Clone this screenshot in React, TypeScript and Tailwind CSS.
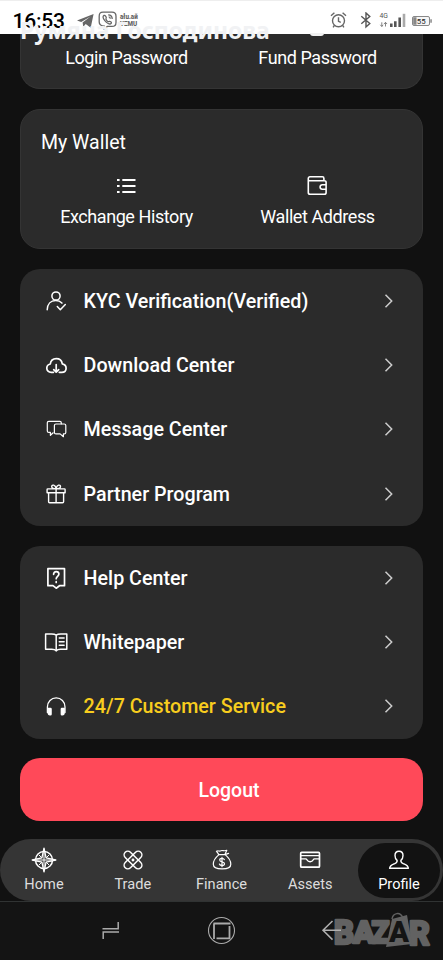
import type { ReactNode } from "react";

type IconProps = { children: ReactNode; w?: number; h?: number; sw?: number; className?: string };

function Icon({ children, w = 24, h = 24, sw = 1.4, className = "" }: IconProps) {
  return (
    <svg
      width={w}
      height={h}
      viewBox={`0 0 ${w} ${h}`}
      fill="none"
      stroke="currentColor"
      strokeWidth={sw}
      strokeLinecap="round"
      strokeLinejoin="round"
      className={`block shrink-0 ${className}`}
    >
      {children}
    </svg>
  );
}

const kyc = (
  <Icon sw={1.5}>
    <circle cx="12" cy="7" r="4.1" />
    <path d="M3.2 20.8c.2-5.6 3.6-9.2 8.5-9.2 3 0 4.8.9 6.2 2.5M13.3 17.6l3 3.1 5-5.2" />
  </Icon>
);
const cloud = (
  <Icon sw={1.7}>
    <path d="M9.4 19.3H7.2c-2.6 0-4.4-1.8-4.4-4.1 0-2.2 1.5-3.8 3.5-4.2.4-3.3 2.8-5.4 6-5.4 3.1 0 5.5 2.1 6 5.2 2.2.4 3.8 2.1 3.8 4.4 0 2.4-1.8 4.1-4.4 4.1h-2.4M12.2 11.5v7.3M9.7 16.6l2.5 2.6 2.5-2.6" />
  </Icon>
);
const message = (
  <Icon sw={1.2}>
    <path d="M9.2 15.8l-2.8 2.5v-2.9H4.8c-1 0-1.5-.6-1.5-1.5V5.8c0-.9.6-1.5 1.5-1.5h11c1 0 1.5.6 1.5 1.5v1" />
    <path d="M12 7h8.2c1 0 1.6.6 1.6 1.5v6.9c0 .9-.6 1.5-1.6 1.5h-.8v2.8l-3.3-2.8H12c-1 0-1.6-.6-1.6-1.5V8.5c0-.9.6-1.5 1.6-1.5z" />
  </Icon>
);
const gift = (
  <Icon sw={1.4}>
    <path d="M3.8 6.9h16.6c.4 0 .7.3.7.7v3.2H3.1V7.6c0-.4.3-.7.7-.7zM4.6 10.8v9c0 .6.4 1 1 1h13c.6 0 1-.4 1-1v-9M12.1 6.9v13.9M12.1 6.7C9.7 6.7 7.7 6.2 7.7 4.5c0-2.2 3.7-2 4.4 2.2.7-4.2 4.4-4.4 4.4-2.2 0 1.7-2 2.2-4.4 2.2z" />
  </Icon>
);
const help = (
  <Icon sw={1.7}>
    <path d="M3.9 2.7h16.6v17h-5L12.2 22.2 9 19.7H3.9z" />
    <path d="M9.6 8.3c0-1.7 1-2.7 2.6-2.7s2.7.9 2.7 2.5c0 2.1-2.7 2.3-2.7 4.6M12.2 15.7v.7" />
  </Icon>
);
const book = (
  <Icon sw={1.5}>
    <path d="M12.2 5.2C11 4.3 9.3 4.1 7.5 4.1H1.6v15.2h6.2c2 0 3.4.3 4.4 1.6 1-1.3 2.4-1.6 4.4-1.6h6.2V4.1h-5.9c-1.8 0-3.5.2-4.7 1.1zM12.2 5.2v15.7M15.3 8.1h4.8M15.3 11.7h4.8M15.3 15.3h4.8" />
  </Icon>
);
const headset = (
  <Icon sw={1.3}>
    <path d="M3.4 18.6v-5.7c0-5.2 3.9-9 8.8-9s8.8 3.8 8.8 9v5.7" />
    <path d="M5 14.3h1.5c.4 0 .6.2.6.6v5.4c0 .4-.2.6-.6.6H6c-1.2 0-1.8-1-1.8-2.3v-4.3zM19.4 14.3h-1.5c-.4 0-.6.2-.6.6v5.4c0 .4.2.6.6.6h.5c1.2 0 1.8-1 1.8-2.3v-4.3z" fill="currentColor" />
  </Icon>
);

function MenuRow({ icon, label, yellow }: { icon: ReactNode; label: string; yellow?: boolean }) {
  return (
    <div className="flex h-[64.2px] items-center pr-[27px] pl-6 text-white">
      {icon}
      <span className={`mt-[1.5px] ml-[15.6px] text-[19.7px] leading-none font-medium whitespace-nowrap ${yellow ? "text-[#f8cd1e]" : ""}`}>
        {label}
      </span>
      <Icon w={16} h={16} sw={1.5} className="ml-auto text-[#cccccc]">
        <path d="M5.5 1.8l6.2 6.2-6.2 6.2" strokeLinecap="butt" strokeLinejoin="miter" />
      </Icon>
    </div>
  );
}

function StatusBar() {
  return (
    <header className="relative flex h-[34px] items-center border-t border-[#eeeeee] bg-white text-[#5c5c5c]">
      <span className="mt-[8px] ml-[12.5px] w-[63.5px] text-[21px] leading-none font-medium tracking-[-0.2px] whitespace-nowrap text-black">16:53</span>
      <svg className="mt-[7px] shrink-0" width="18" height="16" viewBox="0 0 18 16" fill="#666">
        <path d="M1 7.4L17.6 1l-2.9 13.8-5-3.7-2.4 2.7-.7-4.3 7.9-5.9-9.3 5.3z" />
      </svg>
      <svg className="mt-[5px] ml-[4px] shrink-0" width="20" height="19" viewBox="0 0 20 19" fill="none" stroke="#666" strokeWidth="1.3">
        <path d="M5 1.2h9c3 0 4 1.2 4 4v6.2c0 2.8-1 4-4 4H9.3l-3 2.6v-2.8C2.7 14.8 1.2 14 1.2 11V5.2c0-2.8 1-4 3.8-4z" />
        <path d="M6 4.4c-1.8 1-.8 3.2.8 5.2 1.9 2.4 5 4.5 6.4 2.7.9-1.2-1.4-2.3-2.1-1.8-1.2.8-3.9-2.2-3-3.3.7-.8-.9-3.3-2.1-2.8zM10.2 3.8c2.6.1 4 1.6 4 4.2M10.7 5.8c1.1.1 1.6.8 1.6 1.9" />
      </svg>
      <div className="mt-[6px] ml-[2px] w-5 text-[6.3px] leading-[7px] font-black whitespace-nowrap text-[#666]">
        <div>ału.ай</div>
        <div>YEMU</div>
      </div>
      <svg className="absolute top-[10px] left-[330px]" width="17" height="18" viewBox="0 0 17 18" fill="none" stroke="#666" strokeWidth="1.4">
        <circle cx="8.5" cy="9.8" r="6" />
        <path d="M8.5 6.3v4l2.3 1.1M1 4.8l3.4-3M16 4.8l-3.4-3M4.4 14.4l-1.3 2M12.6 14.4l1.3 2" />
      </svg>
      <svg className="absolute top-[11px] left-[360px]" width="12" height="17" viewBox="0 0 12 17" fill="none" stroke="#555" strokeWidth="1.4">
        <path d="M1.3 4.3l8.5 7.2L6 15V1l3.8 3.5-8.5 7.2" />
      </svg>
      <svg className="absolute top-[9px] left-[378px]" width="55" height="18" viewBox="0 0 55 18">
        <text x="1.5" y="7.5" fontSize="6.8" fontFamily="Roboto, sans-serif" fill="#555">4G</text>
        <path d="M3.8 16.5v-4.2M2.3 14.8l1.5 1.7 1.3-1.7M7.5 16.5v-4.2M6 14l1.5-1.7L9 14" fill="none" stroke="#777" strokeWidth=".9" />
        <path d="M12 13.5h2.6V17H12zM16 11.3h2.6V17H16zM20.4 7.5h2.6V17h-2.6z" fill="#555" />
        <path d="M24.7 3.8h2.6V17h-2.6z" fill="#aaa" />
        <rect x="34.5" y="6.5" width="17" height="9" rx="1.5" fill="#f6f6f6" stroke="#888" />
        <path d="M35.2 7.3h3.3v7.5h-3.3zM52.3 9.3h1.5v3.5h-1.5z" fill="#888" />
        <text x="38.8" y="13.8" fontSize="7.8" fontFamily="Roboto, sans-serif" fill="#222">55</text>
      </svg>
      <span className="absolute top-[14.5px] left-[20px] z-10 font-['Noto_Sans'] text-[23px] leading-[28px] font-bold whitespace-nowrap text-[#f1f2f4]">Румяна Господинова</span>
      <span className="absolute top-[32px] left-[310px] h-[2.5px] w-[14px] rounded-b bg-[#f1f1f1]" />
    </header>
  );
}

function NavItem({ icon, label, active }: { icon: ReactNode; label: string; active?: boolean }) {
  return (
    <div className={`flex h-[55px] w-[82px] flex-col items-center rounded-full pt-[4.5px] ${active ? "bg-[#121212] text-white" : "text-[#dddddd]"}`}>
      <div className="text-white">{icon}</div>
      <span className="mt-[1.5px] text-[14.6px] leading-[18px]">{label}</span>
    </div>
  );
}

const compass = (
  <Icon w={26} h={26} sw={1.5}>
    <circle cx="13" cy="13" r="8.5" />
    <path d="M13 1.2l2.1 9.7 9.7 2.1-9.7 2.1L13 24.8l-2.1-9.7L1.2 13l9.7-2.1z" fill="#353535" strokeWidth="1.3" />
    <path d="M13 2v22M2 13h22M8.2 8.2l2.4 2.4M17.8 8.2l-2.4 2.4M8.2 17.8l2.4-2.4M17.8 17.8l-2.4-2.4" strokeWidth="1" />
  </Icon>
);
const trade = (
  <Icon w={26} h={26} sw={1.5}>
    <rect x="9.3" y="2" width="7.4" height="22" rx="3.7" transform="rotate(45 13 13)" />
    <rect x="9.3" y="2" width="7.4" height="22" rx="3.7" transform="rotate(-45 13 13)" />
    <circle cx="13" cy="13" r=".7" fill="currentColor" />
  </Icon>
);
const finance = (
  <Icon w={26} h={26} sw={1.2}>
    <path d="M9.7 7.4L7.4 4.2c2-.8 3.1.5 4.6-.5 1.5-.8 2.8.8 5.8-.4l-1.9 4.1M9.4 7.7h7M9.7 7.9c-2.5 2.1-5.4 5.4-5.4 9.3 0 3.3 2.4 4.7 8.8 4.7s8.7-1.4 8.7-4.7c0-3.9-2.9-7.2-5.4-9.3M16.6 7.4l3-1" />
    <path d="M15.3 12.6c-.4-.8-1.2-1.2-2.3-1.2-1.4 0-2.3.7-2.3 1.7 0 2.4 4.8 1.1 4.8 3.6 0 1.1-1 1.8-2.5 1.8-1.4 0-2.3-.6-2.6-1.5M13 10.3v9.4" />
  </Icon>
);
const assets = (
  <Icon w={26} h={26} sw={1.7}>
    <rect x="3.7" y="5.4" width="18.8" height="14.8" rx="1" />
    <path d="M4 8.6h18.2M4 11.8h4.7c.8 0 1 .5 1.4 1.2.5 1 1.4 1.7 3 1.7s2.5-.7 3-1.7c.4-.7.6-1.2 1.4-1.2h4.7" strokeWidth="1.35" />
  </Icon>
);
const person = (
  <Icon w={26} h={26} sw={1.4}>
    <path d="M13 4.2c-2.6 0-4 1.8-4 4.3 0 2.2.8 3.8 2.1 4.9.3 1.8-.5 2.5-2.3 3.2-2.5 1-4.8 1.5-5.2 4.7h18.8c-.4-3.2-2.7-3.7-5.2-4.7-1.8-.7-2.6-1.4-2.3-3.2C16.2 12.3 17 10.7 17 8.5c0-2.5-1.4-4.3-4-4.3z" />
  </Icon>
);

export default function App() {
  return (
    <div className="flex h-[960px] w-[443px] flex-col overflow-hidden bg-[#111111] font-['Roboto',sans-serif] text-white">
      <StatusBar />
      <main className="mx-5 flex flex-col text-[18px] tracking-[-0.42px]">
        <section className="flex h-[55px] rounded-b-[20px] border border-t-0 border-[#343434] bg-[#2b2b2b] pt-[14px] leading-5">
          <div className="w-[211px] text-center">Login Password</div>
          <div className="w-[171px] text-center">Fund Password</div>
        </section>

        <section className="mt-5 flex h-[140px] flex-col rounded-[20px] border border-[#343434] bg-[#2b2b2b]">
          <h2 className="mt-[21px] ml-5 text-[19.5px] leading-6 tracking-normal">My Wallet</h2>
          <div className="mt-[18px] flex leading-5">
            <div className="flex w-[211px] flex-col items-center">
              <Icon w={24} h={24} sw={2} className="-ml-px">
                <path d="M3 7h2.6M8.3 7H21.5M3 13h2.6M8.3 13H21.5M3 19h2.6M8.3 19H21.5" strokeLinecap="butt" />
              </Icon>
              <span className="mt-[10px]">Exchange History</span>
            </div>
            <div className="flex w-[171px] flex-col items-center">
              <Icon w={24} h={24} sw={1.6} className="-ml-px">
                <path d="M18.9 7.5V5.4c0-1-.5-1.6-1.5-1.6H5c-1 0-1.7.7-1.7 1.8v13.9c0 1.1.7 1.8 1.8 1.8h14.2c1.1 0 1.8-.7 1.8-1.8V9.3c0-1-.7-1.6-1.7-1.6H3.5M21 11.8h-3.7c-1.3 0-2.2.9-2.2 2.2s.9 2.2 2.2 2.2H21" />
              </Icon>
              <span className="mt-[10px]">Wallet Address</span>
            </div>
          </div>
        </section>

        <section className="mt-5 h-[257px] rounded-[20px] bg-[#2b2b2b] tracking-normal">
          <MenuRow icon={kyc} label="KYC Verification(Verified)" />
          <MenuRow icon={cloud} label="Download Center" />
          <MenuRow icon={message} label="Message Center" />
          <MenuRow icon={gift} label="Partner Program" />
        </section>

        <section className="mt-5 h-[193px] rounded-[20px] bg-[#2b2b2b] tracking-normal">
          <MenuRow icon={help} label="Help Center" />
          <MenuRow icon={book} label="Whitepaper" />
          <MenuRow icon={headset} label="24/7 Customer Service" yellow />
        </section>

        <button className="mt-[19px] flex h-[63px] items-center justify-center rounded-[20px] bg-[#ff4959] pt-[1.5px] pl-[15px] text-[19.5px] font-medium tracking-normal">Logout</button>
      </main>

      <nav className="mt-[18px] flex h-[62px] shrink-0 items-center justify-between rounded-full bg-[#353535] px-[3px]">
        <NavItem icon={compass} label="Home" />
        <NavItem icon={trade} label="Trade" />
        <NavItem icon={finance} label="Finance" />
        <NavItem icon={assets} label="Assets" />
        <NavItem icon={person} label="Profile" active />
      </nav>

      <footer className="flex flex-1 border-t border-[#303333] bg-[#141414]">
        <svg width="443" height="58" viewBox="0 902 443 58" fill="none" stroke="#aaaaaa" strokeWidth="1.5">
          <path d="M118.2 922v6.8H102.5M103.2 939v-7H119" />
          <circle cx="221.5" cy="930.5" r="13" strokeWidth="1.1" />
          <path d="M213.5 923.5h17M214 923.5v15.5M229.5 926v12.3h-13" strokeWidth="1.8" />
          <g fill="#626262" stroke="#626262" strokeWidth="2.4" strokeLinejoin="round" fontFamily="Roboto, sans-serif" fontWeight="900">
            <text x="334" y="944" fontSize="33" textLength="20" lengthAdjust="spacingAndGlyphs">B</text>
            <text x="353" y="943" fontSize="31" textLength="22" lengthAdjust="spacingAndGlyphs">A</text>
            <text x="371.5" y="943" fontSize="31" textLength="18" lengthAdjust="spacingAndGlyphs">Z</text>
            <text x="409" y="945" fontSize="34" textLength="21" lengthAdjust="spacingAndGlyphs">R</text>
            <path d="M392 919l15-4 5 29-26 3z" stroke="none" />
            <path d="M392 919c1-6 8-8 11-1" fill="none" strokeWidth="1.4" />
            <text x="389" y="942" fontSize="30" textLength="20" lengthAdjust="spacingAndGlyphs" fill="#141414" stroke="none">A</text>
          </g>
          <path d="M332.5 921l-9.5 9.3 9.5 9.3M324 930.3h17" stroke="#b0b0b0" />
        </svg>
      </footer>
    </div>
  );
}
